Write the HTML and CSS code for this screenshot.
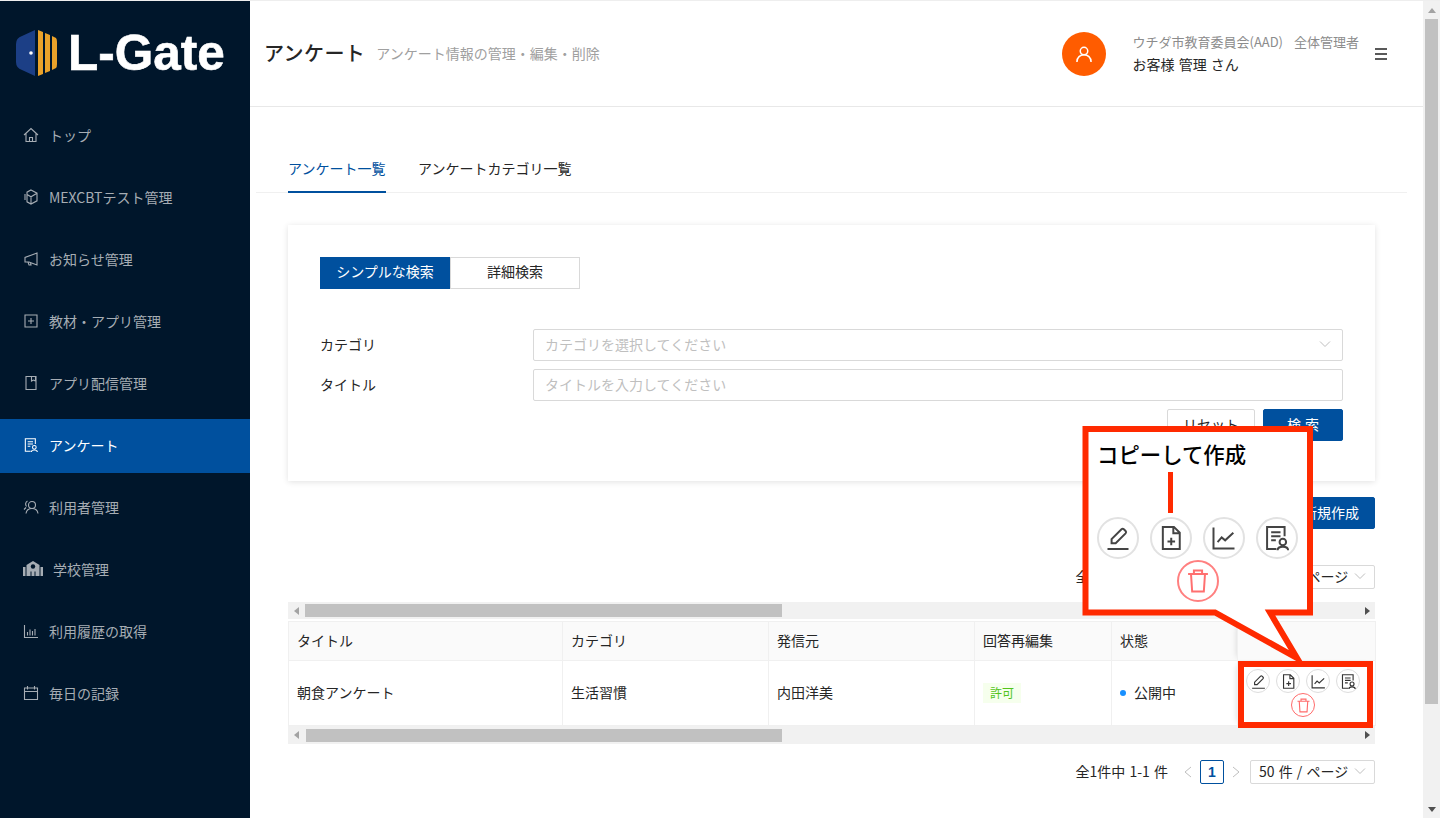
FILE: index.html
```html
<!DOCTYPE html>
<html lang="ja">
<head>
    <meta charset="UTF-8">
    <title>アンケート</title>
    <link rel="stylesheet" href="styles.css">
</head>
<body>
    <svg class="sprite">
        <symbol id="i-edit" viewBox="0 0 24 24"><path d="M3 21.500H21M6.500 16.500V13L15 4.500a1.500 1.500 0 0 1 2 0l1.500 1.500a1.500 1.500 0 0 1 0 2L10 16.500Z"/></symbol>
        <symbol id="i-copy" viewBox="0 0 24 24"><path d="M5 2.500H14.500L19.500 7.500V21.500H5ZM14 2.500V8H19.500M9 15H15.500M12.200 11.800V18.200"/></symbol>
        <symbol id="i-chart" viewBox="0 0 24 24"><path d="M3 3V21H21M6.500 15.500L10 11.500L13 14L20 7.500"/></symbol>
        <symbol id="i-survey" viewBox="0 0 24 24"><path d="M18.500 10.500V2.500H3.500V21.500H11.500M7 7H15M7 10.500H15M7 14H11"/><circle cx="17" cy="15.500" r="2.800"/><path d="M12.500 22.500C12.500 18.500 21.500 18.500 21.500 22.500"/></symbol>
        <symbol id="i-trash" viewBox="0 0 24 24"><path d="M3.500 6H20.500M8.500 6V3H15.500V6M6 6L7 21H17L18 6"/></symbol>
    </svg>

    <div class="page">
        <aside class="sidebar">
            <div class="logo">
                <svg class="logo-mark" viewBox="0 0 41 46">
                    <path fill="#1c3f86" d="M19 0V46L6 40Q0 38 0 32V14Q0 8 6 6Z"/>
                    <circle cx="15" cy="23" r="1.800" fill="#fff"/>
                    <path fill="#eaa22a" d="M22 0L27 2V44L22 46ZM29 3L34 5V41L29 43ZM36 6L40 8Q41 9 41 12V34Q41 37 40 38L36 40Z"/>
                </svg>
                <span class="logo-text">L-Gate</span>
            </div>
            <nav class="nav">
                <a class="nav-item"><svg class="nav-icon" viewBox="0 0 16 16"><path d="M1 8L8 1.500L15 8M3 6.500V14.500H13V6.500M6.500 14.500V10.500H9.500V14.500"/></svg>トップ</a>
                <a class="nav-item"><svg class="nav-icon" viewBox="0 0 16 16"><path d="M8 1L14 4.200V11.800L8 15L4 12.800V3.200ZM4 5.500L8 7.800L14 4.200M8 7.800V15M2 5V11"/></svg>MEXCBTテスト管理</a>
                <a class="nav-item"><svg class="nav-icon" viewBox="0 0 16 16"><path d="M14 2V14L6 11H2V6.500L14 2ZM5 11L6 14H8L7.500 12"/></svg>お知らせ管理</a>
                <a class="nav-item"><svg class="nav-icon" viewBox="0 0 16 16"><path d="M2 2H14V14H2ZM8 5V11M5 8H11"/></svg>教材・アプリ管理</a>
                <a class="nav-item"><svg class="nav-icon" viewBox="0 0 16 16"><path d="M3 1.500H13V14.500H3ZM8.500 1.500V6L10.500 5L12.500 6V1.500"/></svg>アプリ配信管理</a>
                <a class="nav-item active"><svg class="nav-icon" viewBox="0 0 24 24"><use href="#i-survey"/></svg>アンケート</a>
                <a class="nav-item"><svg class="nav-icon" viewBox="0 0 16 16"><circle cx="9" cy="6" r="3.500"/><path d="M3 14.500C3.500 11 6 9.500 9 9.500S14.500 11 15 14.500M4.500 2C2.500 3 2 5.500 3.500 7.500M1 10.500L3 8.500"/></svg>利用者管理</a>
                <a class="nav-item"><svg class="nav-icon-wide" viewBox="0 0 20 16"><path d="M0 6H2.500V15H0ZM17.500 6H20V15H17.500ZM10 0L16.500 4V15H12.500V10.500H7.500V15H3.500V4ZM8.500 10.500V15H11.500V10.500Z"/><circle cx="10" cy="5.500" r="2.200" fill="#00162b"/></svg>学校管理</a>
                <a class="nav-item"><svg class="nav-icon" viewBox="0 0 16 16"><path d="M1.500 2V14.500H15M4.500 12.500V9M7 12.500V6.500M9.500 12.500V8M12 12.500V6"/></svg>利用履歴の取得</a>
                <a class="nav-item"><svg class="nav-icon" viewBox="0 0 16 16"><path d="M1.500 3H14.500V14.500H1.500ZM1.500 6.500H14.500M4.500 1V4.500M11.500 1V4.500"/></svg>毎日の記録</a>
            </nav>
        </aside>

        <main class="main">
            <header class="topbar">
                <h1 class="title">アンケート</h1>
                <span class="subtitle">アンケート情報の管理・編集・削除</span>
                <div class="avatar">
                    <svg viewBox="0 0 24 24"><circle cx="12" cy="8.500" r="4.500"/><path d="M3.500 21.500C3.500 16 7.500 13 12 13S20.500 16 20.500 21.500"/></svg>
                </div>
                <div class="user">
                    <div class="user-org"><span>ウチダ市教育委員会(AAD)</span><span>全体管理者</span></div>
                    <div class="user-name">お客様 管理 さん</div>
                </div>
                <div class="burger"><i></i><i></i><i></i></div>
            </header>

            <section class="content">
                <div class="tabs">
                    <a class="tab active">アンケート一覧</a>
                    <a class="tab">アンケートカテゴリ一覧</a>
                </div>

                <div class="card">
                    <div class="toggle">
                        <a class="toggle-btn active">シンプルな検索</a>
                        <a class="toggle-btn">詳細検索</a>
                    </div>
                    <div class="form">
                        <div class="form-row">
                            <label class="form-label">カテゴリ</label>
                            <div class="input">カテゴリを選択してください<svg class="chevron" viewBox="0 0 12 12"><path d="M1 3.500L6 8.500L11 3.500"/></svg></div>
                        </div>
                        <div class="form-row">
                            <label class="form-label">タイトル</label>
                            <div class="input">タイトルを入力してください</div>
                        </div>
                        <div class="form-actions">
                            <button class="btn btn-reset">リセット</button>
                            <button class="btn btn-primary btn-search">検 索</button>
                        </div>
                    </div>
                </div>

                <div class="create-row">
                    <button class="btn btn-primary btn-create">新規作成</button>
                </div>

                <div class="pager pager-top">
                    <span class="pager-total">全1件中 1-1 件</span>
                    <svg class="pager-arrow" viewBox="0 0 8 12"><path d="M7 1L1 6L7 11"/></svg>
                    <span class="pager-num">1</span>
                    <svg class="pager-arrow" viewBox="0 0 8 12"><path d="M1 1L7 6L1 11"/></svg>
                    <div class="pager-size">50 件 / ページ<svg class="chevron" viewBox="0 0 12 12"><path d="M1 3.500L6 8.500L11 3.500"/></svg></div>
                </div>

                <div class="hbar hbar-top"><i class="arrow-left"></i><b></b><i class="arrow-right"></i></div>
                <table class="table">
                    <colgroup>
                        <col class="col-title"><col class="col-cat"><col class="col-from"><col class="col-edit"><col class="col-state"><col class="col-act">
                    </colgroup>
                    <thead>
                        <tr><th>タイトル</th><th>カテゴリ</th><th>発信元</th><th>回答再編集</th><th>状態</th><th class="fixed"></th></tr>
                    </thead>
                    <tbody>
                        <tr>
                            <td>朝食アンケート</td>
                            <td>生活習慣</td>
                            <td>内田洋美</td>
                            <td><span class="tag">許可</span></td>
                            <td><span class="dot"></span>公開中</td>
                            <td class="fixed">
                                <div class="acts">
                                    <a class="act"><svg viewBox="0 0 24 24"><use href="#i-edit"/></svg></a>
                                    <a class="act"><svg viewBox="0 0 24 24"><use href="#i-copy"/></svg></a>
                                    <a class="act"><svg viewBox="0 0 24 24"><use href="#i-chart"/></svg></a>
                                    <a class="act"><svg viewBox="0 0 24 24"><use href="#i-survey"/></svg></a>
                                    <a class="act act-danger"><svg viewBox="0 0 24 24"><use href="#i-trash"/></svg></a>
                                </div>
                            </td>
                        </tr>
                    </tbody>
                </table>
                <div class="hbar hbar-bottom"><i class="arrow-left"></i><b></b><i class="arrow-right"></i></div>

                <div class="pager pager-bottom">
                    <span class="pager-total">全1件中 1-1 件</span>
                    <svg class="pager-arrow" viewBox="0 0 8 12"><path d="M7 1L1 6L7 11"/></svg>
                    <span class="pager-num">1</span>
                    <svg class="pager-arrow" viewBox="0 0 8 12"><path d="M1 1L7 6L1 11"/></svg>
                    <div class="pager-size">50 件 / ページ<svg class="chevron" viewBox="0 0 12 12"><path d="M1 3.500L6 8.500L11 3.500"/></svg></div>
                </div>
            </section>
        </main>

        <div class="vscroll"><i class="arrow-up"></i><b></b><i class="arrow-down"></i></div>
    </div>

    <!-- red annotation on top of the page -->
    <svg class="annotation" viewBox="0 0 1440 818">
        <rect class="annotation-frame" x="1241" y="664" width="129" height="61"/>
        <path class="annotation-bubble" d="M1085.500 429H1310V612.500H1270L1297 658L1215 612.500H1085.500Z"/>
    </svg>
    <div class="callout">
        <div class="callout-title">コピーして作成</div>
        <div class="callout-stem"></div>
        <div class="acts acts-large">
            <a class="act"><svg viewBox="0 0 24 24"><use href="#i-edit"/></svg></a>
            <a class="act"><svg viewBox="0 0 24 24"><use href="#i-copy"/></svg></a>
            <a class="act"><svg viewBox="0 0 24 24"><use href="#i-chart"/></svg></a>
            <a class="act"><svg viewBox="0 0 24 24"><use href="#i-survey"/></svg></a>
            <a class="act act-danger"><svg viewBox="0 0 24 24"><use href="#i-trash"/></svg></a>
        </div>
    </div>
</body>
</html>
```

FILE: styles.css
```css
* {
    box-sizing: border-box;
}
html, body {
    margin: 0;
    height: 818px;
    overflow: hidden;
}
body {
    position: relative;
    background: #fff;
    color: #262626;
    font-family: "Noto Sans CJK JP", "Noto Sans", sans-serif;
    font-size: 14px;
    line-height: 22px;
}
.sprite {
    position: absolute;
    width: 0;
    height: 0;
}
.page {
    display: flex;
    height: 818px;
    border-top: 1px solid #eee;
}

/* sidebar */
.sidebar {
    width: 250px;
    flex: none;
    background: #00162b;
}
.logo {
    display: flex;
    align-items: center;
    gap: 11px;
    height: 108px;
    padding: 0 0 4px 16px;
}
.logo-mark {
    width: 41px;
    height: 46px;
    flex: none;
}
.logo-text {
    color: #fff;
    font-family: "Liberation Sans", sans-serif;
    font-size: 49.500px;
    font-weight: 700;
    line-height: 50px;
    -webkit-text-stroke: .6px #fff;
}
.nav {
    display: flex;
    flex-direction: column;
    gap: 8px;
}
.nav-item {
    display: flex;
    align-items: center;
    gap: 10px;
    height: 54px;
    padding: 0 0 2px 23px;
    color: #a6adb4;
}
.nav-item.active {
    background: #00509e;
    color: #fff;
}
.nav-icon {
    width: 16px;
    height: 16px;
    flex: none;
    fill: none;
    stroke: currentColor;
    stroke-width: 1.100;
}
.nav-item.active .nav-icon {
    stroke-width: 1.600;
}
.nav-icon-wide {
    width: 20px;
    height: 16px;
    flex: none;
    fill: #a6adb4;
}

/* header */
.main {
    width: 1173px;
    flex: none;
}
.topbar {
    display: flex;
    align-items: center;
    height: 106px;
    padding: 0 36px 0 14px;
    border-bottom: 1px solid #e8e8e8;
}
.title {
    margin: 0 11px 2px 0;
    font-size: 20px;
    font-weight: 500;
    letter-spacing: .4px;
    line-height: 28px;
}
.subtitle {
    margin-bottom: 2px;
    color: #a0a0a0;
}
.avatar {
    display: flex;
    align-items: center;
    justify-content: center;
    width: 44px;
    height: 44px;
    margin-left: auto;
    border-radius: 50%;
    background: #ff5c00;
}
.avatar svg {
    width: 20px;
    height: 20px;
    fill: none;
    stroke: #fff;
    stroke-width: 1.800;
}
.user {
    margin: 0 0 1px 27px;
    font-size: 13px;
}
.user-org {
    display: flex;
    gap: 11px;
    color: #8c8c8c;
}
.user-name {
    color: #262626;
    font-size: 14px;
    word-spacing: 1px;
}
.burger {
    display: flex;
    flex-direction: column;
    gap: 3px;
    width: 12px;
    margin-left: 16px;
}
.burger i {
    height: 2px;
    background: #595959;
}

/* content */
.content {
    padding: 40px 48px 0 38px;
}
.tabs {
    display: flex;
    gap: 32px;
    height: 46px;
    margin: 0 -32px;
    padding: 0 32px;
    border-bottom: 1px solid #f0f0f0;
}
.tab {
    min-width: 98px;
    height: 46px;
    padding-top: 10px;
}
.tab.active {
    border-bottom: 2px solid #00509e;
    color: #00509e;
}
.card {
    height: 256px;
    margin-top: 32px;
    padding: 32px;
    box-shadow: 0 1px 6px rgba(0, 0, 0, .12);
}
.toggle {
    display: flex;
    width: 260px;
}
.toggle-btn {
    width: 130px;
    height: 32px;
    border: 1px solid #d9d9d9;
    line-height: 26px;
    text-align: center;
}
.toggle-btn.active {
    border-color: #00509e;
    background: #00509e;
    color: #fff;
}
.form {
    display: flex;
    flex-direction: column;
    gap: 8px;
    margin-top: 40px;
}
.form-row {
    display: flex;
    align-items: center;
}
.form-label {
    width: 213px;
    flex: none;
    padding-bottom: 2px;
}
.input {
    display: flex;
    align-items: center;
    justify-content: space-between;
    flex: 1;
    height: 32px;
    padding: 0 11px 2px;
    border: 1px solid #d9d9d9;
    border-radius: 2px;
    color: #bfbfbf;
}
.chevron {
    width: 12px;
    height: 12px;
    flex: none;
    fill: none;
    stroke: #bfbfbf;
}
.form-actions {
    display: flex;
    justify-content: flex-end;
    gap: 8px;
}
.btn {
    height: 32px;
    padding: 0 0 2px;
    border: 1px solid #d9d9d9;
    border-radius: 2px;
    background: #fff;
    color: #262626;
    font: inherit;
}
.btn-primary {
    border-color: #00509e;
    background: #00509e;
    color: #fff;
}
.btn-reset {
    width: 88px;
}
.btn-search {
    width: 80px;
    word-spacing: 1px;
}
.create-row {
    display: flex;
    justify-content: flex-end;
    margin-top: 16px;
}
.btn-create {
    width: 96px;
    padding-right: 15px;
    text-align: right;
}

/* pagination */
.pager {
    display: flex;
    align-items: center;
    justify-content: flex-end;
    height: 24px;
}
.pager-top {
    margin-top: 36px;
}
.pager-bottom {
    margin-top: 16px;
}
.pager-total {
    margin: 0 16px 2px 0;
    word-spacing: 1px;
}
.pager-arrow {
    width: 8px;
    height: 12px;
    flex: none;
    fill: none;
    stroke: #bfbfbf;
}
.pager-num {
    width: 24px;
    height: 24px;
    margin: 0 8px;
    border: 1px solid #00509e;
    border-radius: 2px;
    color: #00509e;
    font-family: "Liberation Sans", sans-serif;
    font-weight: 700;
    line-height: 22px;
    text-align: center;
}
.pager-size {
    display: flex;
    align-items: center;
    justify-content: space-between;
    width: 125px;
    height: 24px;
    margin-left: 10px;
    padding: 0 8px 2px;
    border: 1px solid #d9d9d9;
    border-radius: 2px;
    word-spacing: 1px;
}

/* scrollbars */
.hbar {
    display: flex;
    align-items: center;
    justify-content: space-between;
    height: 17px;
    background: #f1f1f1;
}
.hbar b {
    height: 13px;
    margin-right: auto;
    background: #c1c1c1;
}
.hbar-top {
    margin-top: 13px;
}
.hbar-top b {
    width: 477px;
    margin-left: 1px;
}
.hbar-bottom {
    height: 18px;
}
.hbar-bottom b {
    width: 476px;
    margin-left: 2px;
}
.hbar i {
    flex: none;
    width: 0;
    height: 0;
    border-style: solid;
    border-color: transparent;
    border-width: 4px 0;
}
.arrow-left {
    margin: 0 5px 0 6px;
    border-right: 5px solid #a3a3a3 !important;
}
.arrow-right {
    margin-right: 5px;
    border-left: 5px solid #505050 !important;
}
.vscroll {
    display: flex;
    flex-direction: column;
    align-items: center;
    width: 17px;
    flex: none;
    background: #f1f1f1;
}
.vscroll b {
    width: 13px;
    height: 685px;
    margin-top: 6px;
    background: #c1c1c1;
}
.vscroll i {
    width: 0;
    height: 0;
    border-style: solid;
    border-color: transparent;
    border-width: 0 4px;
}
.arrow-up {
    margin-top: 7px;
    border-bottom: 5px solid #a3a3a3 !important;
}
.arrow-down {
    margin-top: auto;
    margin-bottom: 6px;
    border-top: 5px solid #505050 !important;
}

/* table */
.table {
    width: 1087px;
    height: 104px;
    margin-top: 2px;
    border-collapse: collapse;
    table-layout: fixed;
}
.col-title { width: 274px; }
.col-cat { width: 206px; }
.col-from { width: 206px; }
.col-edit { width: 137px; }
.col-state { width: 126px; }
.col-act { width: 138px; }
.table th, .table td {
    padding: 0 8px 3px;
    border: 1px solid #f0f0f0;
    font-weight: 400;
    text-align: left;
}
.table th {
    height: 39px;
    background: #fafafa;
}
.table td {
    height: 65px;
}
.table .fixed {
    padding: 0 0 0 8px;
    border-left: 0;
    box-shadow: -5px 0 6px -4px rgba(0, 0, 0, .15);
}
.fixed .acts {
    width: 114px;
}
.tag {
    display: inline-block;
    height: 20px;
    padding: 0 7px;
    background: #f6ffed;
    color: #52c41a;
    font-size: 12px;
    line-height: 20px;
}
.dot {
    display: inline-block;
    width: 6px;
    height: 6px;
    margin-right: 8px;
    border-radius: 50%;
    background: #1890ff;
    vertical-align: 2px;
}
.acts {
    display: flex;
    flex-wrap: wrap;
    justify-content: center;
    gap: 0 6px;
}
.act {
    display: flex;
    align-items: center;
    justify-content: center;
    width: 24px;
    height: 24px;
    border: 1px solid #ddd;
    border-radius: 50%;
    background: #fff;
}
.act svg {
    width: 17px;
    height: 17px;
    fill: none;
    stroke: #333;
    stroke-width: 1.600;
}
.act-danger {
    border-color: #ff6b6b;
}
.act-danger svg {
    stroke: #ff6b6b;
}
.acts-large {
    gap: 1px 11px;
}
.acts-large .act {
    width: 42px;
    height: 42px;
    border-width: 2px;
    border-color: #e2e2e2;
}
.acts-large .act-danger {
    border-color: #ff8080;
}
.acts-large .act svg {
    width: 28px;
    height: 28px;
    stroke: #444;
    stroke-width: 1.700;
}
.acts-large .act-danger svg {
    stroke: #ff7070;
}

/* annotation */
.annotation {
    position: absolute;
    top: 0;
    left: 0;
    width: 1440px;
    height: 818px;
}
.annotation-frame, .annotation-bubble {
    stroke: #ff2a00;
    stroke-width: 6;
}
.annotation-frame {
    fill: none;
}
.annotation-bubble {
    fill: #fff;
}
.callout {
    position: absolute;
    top: 439px;
    left: 1097px;
    width: 201px;
}
.callout-title {
    color: #000;
    font-size: 21.400px;
    font-weight: 500;
    line-height: 30px;
}
.callout-stem {
    width: 5px;
    height: 41px;
    margin: 3px 0 4px 71px;
    background: #ff2a00;
}
```
